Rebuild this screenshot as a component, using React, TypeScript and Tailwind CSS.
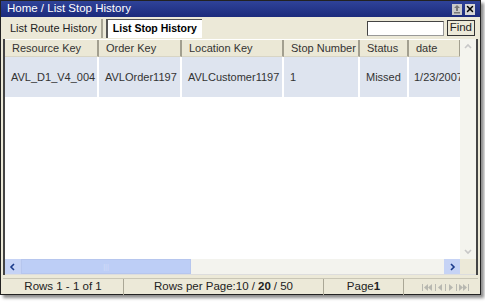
import { X } from "lucide-react";

const columns = [
  { label: "Resource Key", width: "w-[94px]", value: "AVL_D1_V4_004" },
  { label: "Order Key", width: "w-[83px]", value: "AVLOrder1197" },
  { label: "Location Key", width: "w-[102px]", value: "AVLCustomer1197" },
  { label: "Stop Number", width: "w-[76px]", value: "1" },
  { label: "Status", width: "w-[49px]", value: "Missed" },
  { label: "date", width: "w-[52px]", value: "1/23/2007" },
];

function Arrow({ dir }: { dir: "left" | "right" | "up" | "down" }) {
  const d = {
    left: "M6 2 L3 5 L6 8",
    right: "M4 2 L7 5 L4 8",
    up: "M2 6 L5 3 L8 6",
    down: "M2 4 L5 7 L8 4",
  }[dir];
  return (
    <svg width="10" height="10" viewBox="0 0 10 10">
      <path d={d} fill="none" stroke="currentColor" strokeWidth="1.6" />
    </svg>
  );
}

function PagerIcons() {
  return (
    <svg width="48" height="9" viewBox="0 0 48 9" className="text-[#b8b8b0]">
      <g fill="currentColor">
        <rect x="0" y="1" width="1" height="7" />
        <path d="M6 1 L2 4.5 L6 8 Z" />
        <path d="M10 1 L6 4.5 L10 8 Z" />
        <rect x="13" y="1" width="1" height="7" />
        <path d="M20 1 L16 4.5 L20 8 Z" />
        <rect x="23" y="1" width="1" height="7" />
        <path d="M27 1 L31 4.5 L27 8 Z" />
        <rect x="34" y="1" width="1" height="7" />
        <path d="M37 1 L41 4.5 L37 8 Z" />
        <path d="M41 1 L45 4.5 L41 8 Z" />
        <rect x="46" y="1" width="1" height="7" />
      </g>
    </svg>
  );
}

export default function App() {
  return (
    <div className="h-[302px] w-[485px] bg-white font-['Liberation_Sans',Arial,sans-serif] text-[11px] text-[#222]">
      <div className="flex h-[295px] w-[481px] flex-col border border-[#222] bg-[#ece9d8] shadow-[3px_3px_3px_rgba(0,0,0,0.45)]">
        {/* title bar */}
        <div className="flex h-[16px] shrink-0 items-center justify-between bg-gradient-to-b from-[#2f4399] to-[#1c2b7c] pl-[6px] pr-[5px] text-white">
          <span className="text-[11.5px] leading-none">Home / List Stop History</span>
          <div className="flex gap-[3px]">
            <span className="flex h-[11px] w-[10px] items-center justify-center bg-[#c9c9c9] text-[#777]">
              <svg width="8" height="9" viewBox="0 0 8 9">
                <path d="M4 0 L7 3 L5 3 L5 6 L3 6 L3 3 L1 3 Z" fill="currentColor" />
                <rect x="1" y="7" width="6" height="1.5" fill="currentColor" />
              </svg>
            </span>
            <span className="flex h-[11px] w-[10px] items-center justify-center bg-[#d6d6d6] text-black">
              <X size={10} strokeWidth={3.5} />
            </span>
          </div>
        </div>

        {/* tabs */}
        <div className="flex h-[21px] shrink-0 items-end pl-[3px] pr-[5px] text-[11px]">
          <div className="flex h-[19px] items-center whitespace-nowrap border-r-2 border-[#a8a595] pl-[6px] pr-[4px] text-[#222]">
            List Route History
          </div>
          <div className="ml-[3px] flex h-[19px] items-center whitespace-nowrap border-l-2 border-t border-[#555] bg-white pl-[5px] pr-[5px] text-[10.5px] font-bold text-black">
            List Stop History
          </div>
          <div className="ml-auto mb-[2px] flex items-center gap-[3px]">
            <div className="h-[15px] w-[77px] border border-[#999] border-l-[#444] border-t-[#444] bg-white" />
            <button className="flex h-[16px] items-center border border-[#333] bg-[#ece9d8] px-[2px] text-[11.5px] leading-none text-[#222]">
              Find
            </button>
          </div>
        </div>

        {/* grid */}
        <div className="mx-[2px] mt-[1px] flex h-[236px] shrink-0 flex-col border-x-2 border-[#444] bg-white">
          <div className="flex min-h-0 flex-1">
            <div className="flex min-w-0 flex-1 flex-col pt-[1px]">
              <div className="flex h-[17px] shrink-0">
                {columns.map((c) => (
                  <div
                    key={c.label}
                    className={`${c.width} flex shrink-0 items-center overflow-hidden whitespace-nowrap border-r-2 border-b border-[#a29f8f] border-b-[#d8d5c5] bg-[#ebe8d6] pl-[7px] text-[#333]`}
                  >
                    {c.label}
                  </div>
                ))}
              </div>
              <div className="flex h-[40px] shrink-0">
                {columns.map((c, i) => (
                  <div
                    key={c.label}
                    className={`${c.width} flex shrink-0 items-center whitespace-nowrap bg-[#dee4ef] text-[#333] ${
                      i === columns.length - 1 ? "pl-[5px]" : "overflow-hidden border-r-2 border-white pl-[6px]"
                    }`}
                  >
                    {c.value}
                  </div>
                ))}
              </div>
            </div>
            {/* vertical scrollbar */}
            <div className="flex w-[16px] shrink-0 flex-col justify-between bg-[#f4f4ee] text-[#c8c8c8]">
              <div className="flex h-[16px] items-center justify-center">
                <Arrow dir="up" />
              </div>
              <div className="flex h-[16px] items-center justify-center">
                <Arrow dir="down" />
              </div>
            </div>
          </div>
          {/* horizontal scrollbar */}
          <div className="flex h-[16px] shrink-0 border-b border-[#ddd] bg-[#f3f3ee]">
            <div className="flex flex-1 items-center">
              <div className="flex h-[15px] w-[16px] items-center justify-center bg-[#c6d3f5] text-[#1b3a8a]">
                <Arrow dir="left" />
              </div>
              <div className="flex h-[15px] w-[170px] items-center justify-center border border-[#b6c6ee] bg-[#bdcef6] text-[#d3ddf8]">
                <span className="text-[7px] leading-none">|||</span>
              </div>
              <div className="flex-1" />
              <div className="flex h-[15px] w-[16px] items-center justify-center bg-[#c6d3f5] text-[#1b3a8a]">
                <Arrow dir="right" />
              </div>
            </div>
            <div className="w-[16px] bg-[#ece9d8]" />
          </div>
        </div>

        {/* footer */}
        <div className="mx-[2px] mt-[3px] flex h-[17px] shrink-0 border-t border-[#c9c6b6] text-[11.5px] text-[#222]">
          <div className="flex w-[121px] items-center justify-center border-r border-[#aaa796]">Rows 1 - 1 of 1</div>
          <div className="flex w-[200px] items-center justify-center border-r border-[#aaa796]">
            Rows per Page:10 / <b className="mx-[3px]">20</b> / 50
          </div>
          <div className="flex w-[80px] items-center justify-center border-r border-[#aaa796]">
            Page<b>1</b>
          </div>
          <div className="flex flex-1 items-center justify-end pr-[8px]">
            <PagerIcons />
          </div>
        </div>
      </div>
    </div>
  );
}
